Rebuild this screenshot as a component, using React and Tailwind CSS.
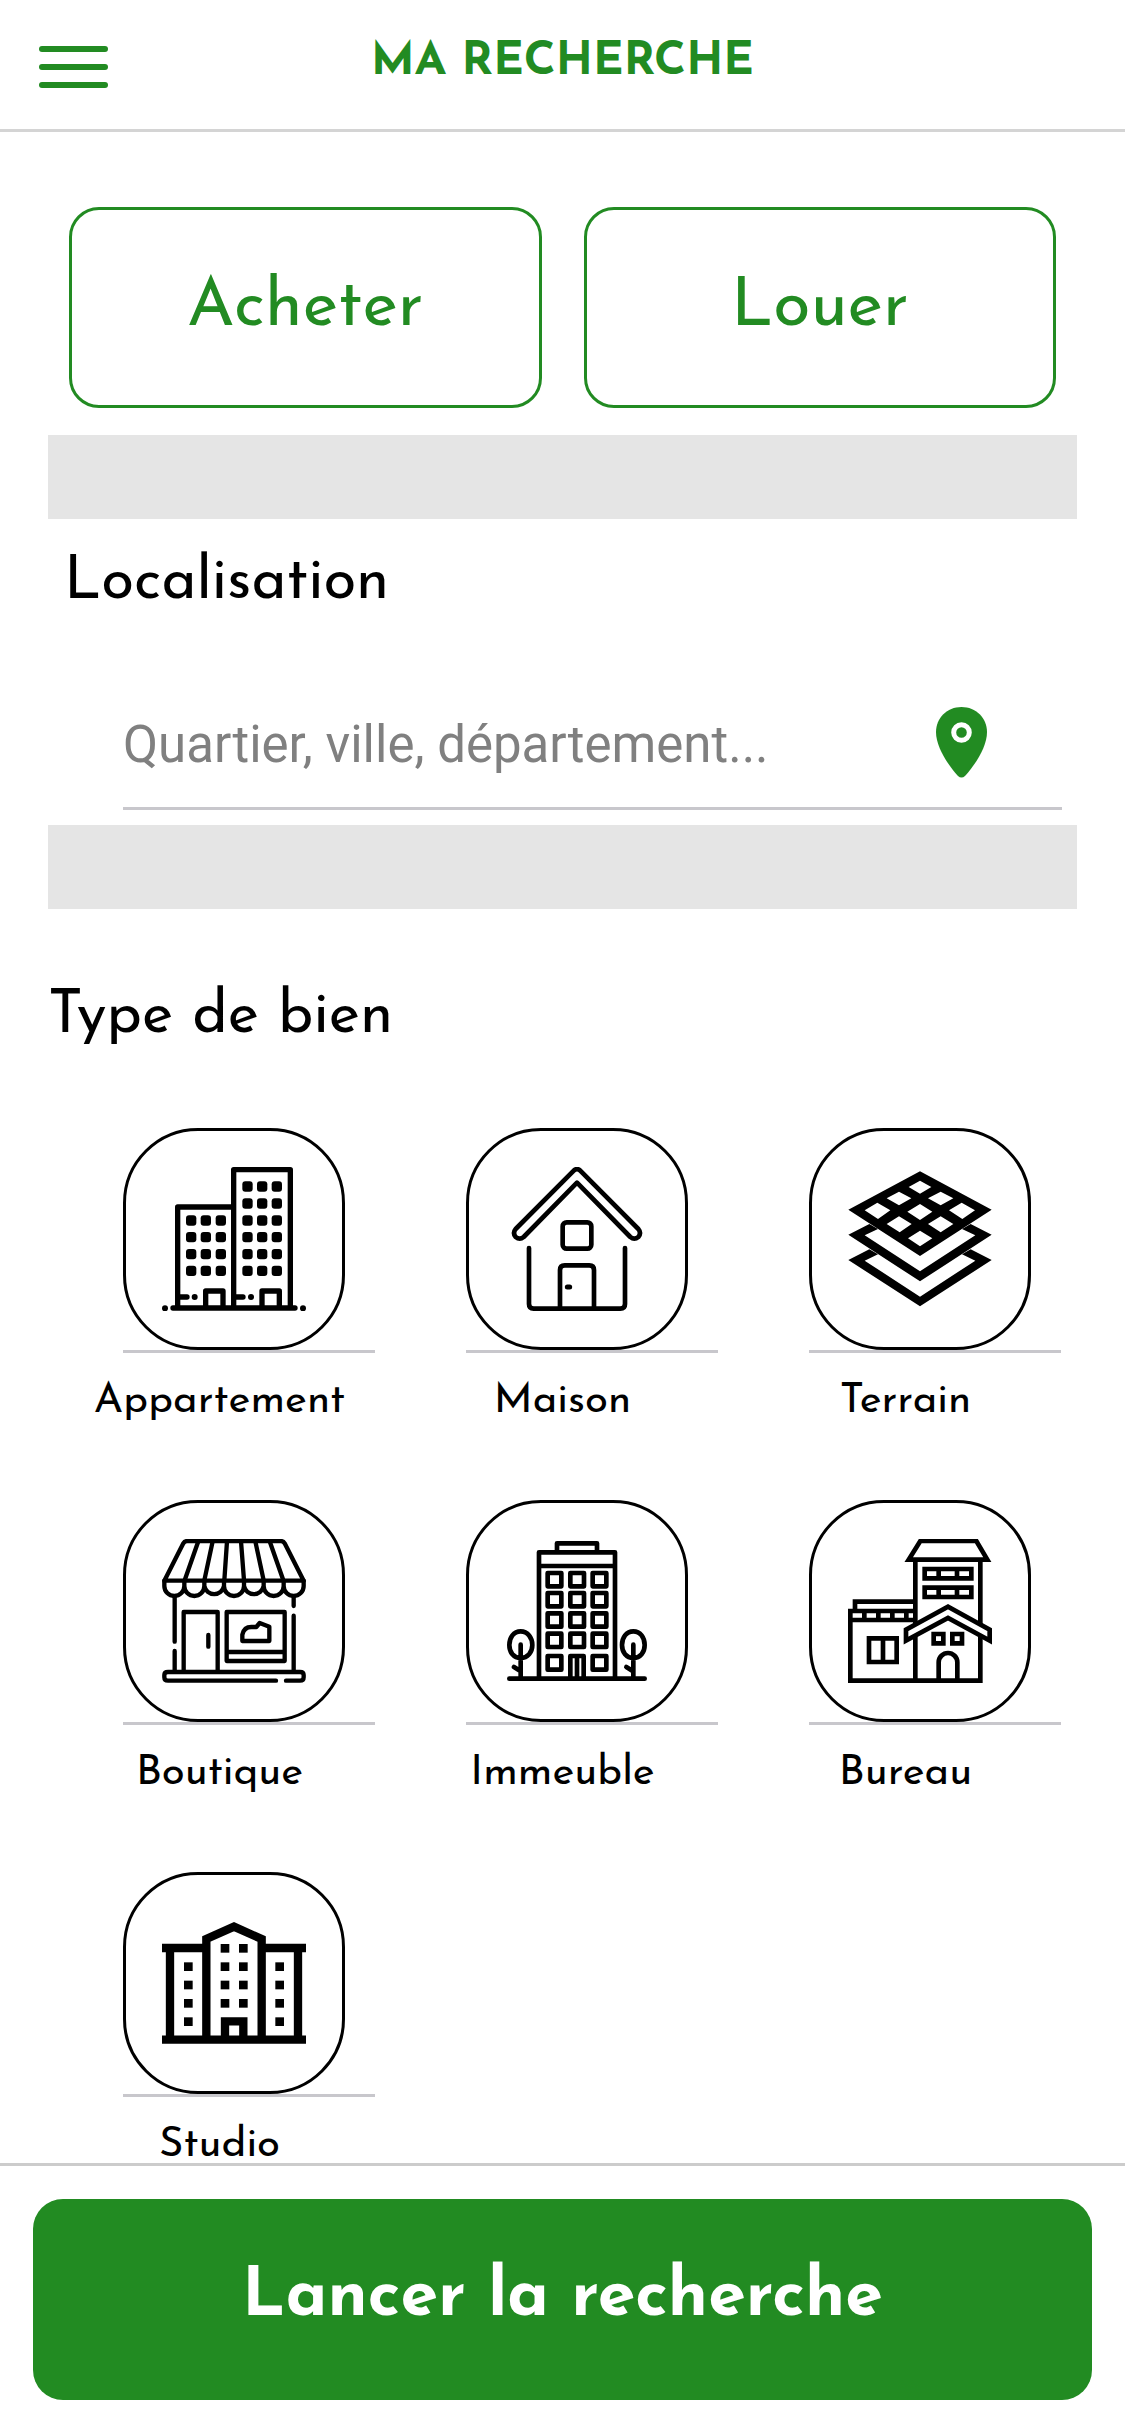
const windowGrid = (xs, ys) => ys.flatMap((y) => xs.map((x) => [x, y]));

function ApartmentIcon() {
  return (
    <svg viewBox="156 171 432 432" className="size-36" aria-hidden="true" fill="none" stroke="black" strokeWidth="16" strokeLinecap="round" strokeLinejoin="round">
      <path d="M203 594V291H371M371 594V179H541V594M189 594H555M287 594V543H339V594M456 594V543H508V594M210 561H231M378 561H399" />
      <g fill="black" stroke="none">
        {windowGrid([228, 272, 317], [316, 366, 417, 467]).map(([x, y]) => (
          <rect key={`${x}-${y}`} x={x} y={y} width="31" height="31" rx="9" />
        ))}
        {windowGrid([397, 441, 485], [214, 265, 316, 366, 417, 467]).map(([x, y]) => (
          <rect key={`${x}-${y}`} x={x} y={y} width="31" height="31" rx="9" />
        ))}
        <circle cx="254" cy="561" r="9" />
        <circle cx="423" cy="561" r="9" />
        <circle cx="165" cy="595" r="9" />
        <circle cx="579" cy="595" r="9" />
      </g>
    </svg>
  );
}

function HouseIcon() {
  return (
    <svg viewBox="162 171 432 432" className="size-36" aria-hidden="true" fill="none" stroke="black" strokeWidth="14" strokeLinecap="round" strokeLinejoin="round">
      <path d="M369 181L194 357Q184 369 194 381Q206 391 218 381L378 218L538 381Q550 391 562 381Q572 369 562 357L387 181Q378 174 369 181Z" />
      <path d="M234 414V582Q234 596 248 596H508Q522 596 522 582V414" />
      <rect x="335" y="337" width="86" height="79" rx="12" />
      <path d="M327 594V480Q327 466 341 466H415Q429 466 429 480V594" />
      <path d="M349 531H356" strokeWidth="15" />
    </svg>
  );
}

function LandIcon() {
  return (
    <svg viewBox="177 171 432 432" className="size-36" aria-hidden="true" fill="black" fillRule="evenodd">
      <path d="M393 184L608 299L393 438L178 299ZM393 212L427 231L393 251L359 231ZM330 245L367 265L330 286L293 265ZM455 245L493 265L455 286L417 265ZM265 278L304 301L267 327L227 301ZM393 282L430 305L393 330L355 305ZM518 278L558 301L520 327L480 301ZM330 319L368 342L332 367L293 342ZM455 319L493 342L455 367L417 342ZM393 362L430 385L393 409L357 385Z" />
      <path d="M178 374L241 342L267 357L227 376L393 484L559 376L519 357L545 342L608 374L393 514Z" />
      <path d="M178 450L241 418L267 433L227 452L393 560L559 452L519 433L545 418L608 450L393 589Z" />
    </svg>
  );
}

function ShopIcon() {
  return (
    <svg viewBox="156 177 432 432" className="size-36" aria-hidden="true" fill="none" stroke="black" strokeWidth="13" strokeLinecap="round" strokeLinejoin="round">
      <path d="M163 302L220 190Q224 183 232 183H512Q520 183 524 190L581 302Z" />
      <path d="M265 184L224 301M308 184L283 301M351 184L343 301M393 184L402 301M436 184L461 301M479 184L520 301" />
      <path d="M163 302V318A30 30 0 0 0 223 318A30 30 0 0 0 283 318A30 30 0 0 0 342 318A30 30 0 0 0 402 318A30 30 0 0 0 461 318A30 30 0 0 0 521 318A30 30 0 0 0 581 318V302M223 302V318M283 302V318M342 302V318M402 302V318M461 302V318M521 302V318" />
      <path d="M194 350V485M194 513V574M551 350V378M551 407V574" />
      <path d="M221 574V396H323V574M295 465V500" />
      <path d="M350 396H524V543H350ZM350 516H524" />
      <path d="M397 483V464Q402 441 424 441H439L449 429L478 440V483Z" />
      <path d="M498 602H174Q163 602 163 592V585Q163 576 174 576H570Q581 576 581 585V592Q581 602 570 602H528" />
    </svg>
  );
}

function BuildingIcon() {
  return (
    <svg viewBox="162 177 432 432" className="size-36" aria-hidden="true" fill="none" stroke="black" strokeWidth="14" strokeLinecap="round" strokeLinejoin="round">
      <path d="M175 596H581M264 595V217H492V595M264 258H492M318 216V190H438V216" />
      {windowGrid([290, 358, 425], [279, 339, 400, 461]).map(([x, y]) => (
        <rect key={`${x}-${y}`} x={x} y={y} width="41" height="40" />
      ))}
      <rect x="290" y="528" width="41" height="41" />
      <rect x="425" y="528" width="41" height="41" />
      <path d="M358 595V528H398V595M378 530V595" />
      <path d="M209 454C188 454 175 473 175 495C175 517 188 534 209 534C230 534 244 517 244 495C244 473 230 454 209 454ZM209 494V595M189 561L208 573" />
      <path d="M547 454C526 454 513 473 513 495C513 517 526 534 547 534C568 534 581 517 581 495C581 473 568 454 547 454ZM547 494V595M526 561L545 573" />
    </svg>
  );
}

function OfficeIcon() {
  return (
    <svg viewBox="177 177 432 432" className="size-36" aria-hidden="true" fill="none" stroke="black" strokeWidth="14">
      <path d="M359 239L394 183H562L595 239ZM379 240V436M574 240V436M379 470V602M574 470V602M581 602H184V393H379M198 387V365H379M184 420H379" />
      <path d="M226 393V420M268 393V420M310 393V420M352 393V420" />
      <path d="M351 482V449L477 380L602 449V482L477 414Z" />
      <path d="M407 267H547V295H407ZM449 267V295M504 267V295M407 323H547V351H407ZM449 323V351M504 323V351" />
      <path d="M434 462H463V490H434ZM490 462H519V490H490Z" />
      <path d="M240 475H323V546H240ZM282 475V546M449 602V547A28 28 0 0 1 505 547V602" />
    </svg>
  );
}

function StudioIcon() {
  return (
    <svg viewBox="156 183 432 432" className="size-36" aria-hidden="true">
      <path d="M156 569H588M156 294H289M455 294H588M180 294V569M564 294V569M289 569V267L372 230L455 267V569M345 569V514H400V569" fill="none" stroke="black" strokeWidth="25" />
      {[...windowGrid([332, 387], [282, 337, 392, 447]), ...windowGrid([222, 496], [337, 392, 447, 502])].map(([x, y]) => (
        <rect key={`${x}-${y}`} x={x} y={y} width="26" height="26" />
      ))}
    </svg>
  );
}

function PinIcon() {
  return (
    <svg viewBox="0 0 51 71" className="h-[71px] w-[51px]" aria-hidden="true">
      <path d="M25.5 0C11 0 0 11 0 25C0 40 12 58 22 69Q25.5 72 29 69C39 58 51 40 51 25C51 11 40 0 25.5 0Z" fill="#228b22" />
      <circle cx="25.5" cy="25.5" r="7.8" fill="none" stroke="white" strokeWidth="5" />
    </svg>
  );
}

const propertyTypes = [
  ["Appartement", ApartmentIcon],
  ["Maison", HouseIcon],
  ["Terrain", LandIcon],
  ["Boutique", ShopIcon],
  ["Immeuble", BuildingIcon],
  ["Bureau", OfficeIcon],
  ["Studio", StudioIcon],
];

function Separator() {
  return <div className="h-[84px] bg-[#e5e5e5]" />;
}

export default function App() {
  return (
    <div className="flex min-h-screen flex-col bg-white font-['Josefin_Sans','Lato',sans-serif] text-black">
      <header className="flex h-[132px] items-center border-b-3 border-[#d4d4d4] px-[39px] text-[#228b22]">
        <button type="button" aria-label="Menu" className="flex w-[69px] flex-col gap-3 pt-1">
          <span className="h-1.5 rounded-full bg-[#228b22]" />
          <span className="h-1.5 rounded-full bg-[#228b22]" />
          <span className="h-1.5 rounded-full bg-[#228b22]" />
        </button>
        <h1 className="flex-1 pb-1 text-center text-[46px] leading-[60px] font-bold">MA RECHERCHE</h1>
        <div className="w-[69px]" />
      </header>

      <main className="flex-1 px-12">
        <div className="grid grid-cols-2 gap-[42px] px-[21px] pt-[75px] pb-[27px]">
          {["Acheter", "Louer"].map((label) => (
            <button key={label} type="button" className="h-[201px] rounded-[30px] border-3 border-[#228b22] text-[68px] text-[#228b22]">
              {label}
            </button>
          ))}
        </div>
        <Separator />

        <section className="pb-[15px]">
          <h2 className="h-[156px] pt-7 pl-4 text-[60px] leading-[72px]">
            <label htmlFor="location">Localisation</label>
          </h2>
          <div className="mr-[15px] ml-[75px] flex h-[135px] items-center border-b-3 border-[#c8c7cc] pr-[75px]">
            <input
              id="location"
              type="text"
              placeholder="Quartier, ville, département..."
              className="min-w-0 flex-1 pt-2 font-['Roboto',sans-serif] text-[51px] outline-none placeholder:text-[#808080]"
            />
            <button type="button" aria-label="Ma position" className="pt-0.5">
              <PinIcon />
            </button>
          </div>
        </section>
        <Separator />

        <section>
          <h2 className="h-[219px] pt-[72px] text-[60px] leading-[72px]">Type de bien</h2>
          <div className="grid grid-cols-3 gap-y-[81px]">
            {propertyTypes.map(([label, Icon]) => (
              <button key={label} type="button" className="flex flex-col">
                <span className="flex w-full pr-4 pl-[75px]">
                  <span className="flex flex-1 border-b-3 border-[#c8c7cc]">
                    <span className="flex size-[222px] items-center justify-center rounded-[75px] border-3 border-black">
                      <Icon />
                    </span>
                  </span>
                </span>
                <span className="h-[66px] w-full pt-6 text-center text-[42px] leading-[50px]">{label}</span>
              </button>
            ))}
          </div>
        </section>
      </main>

      <footer className="border-t-3 border-[#cccccc] px-[33px] pt-[33px] pb-9">
        <button type="button" className="h-[201px] w-full rounded-[30px] bg-[#228b22] pb-1 text-[68px] font-bold text-white">
          Lancer la recherche
        </button>
      </footer>
    </div>
  );
}
